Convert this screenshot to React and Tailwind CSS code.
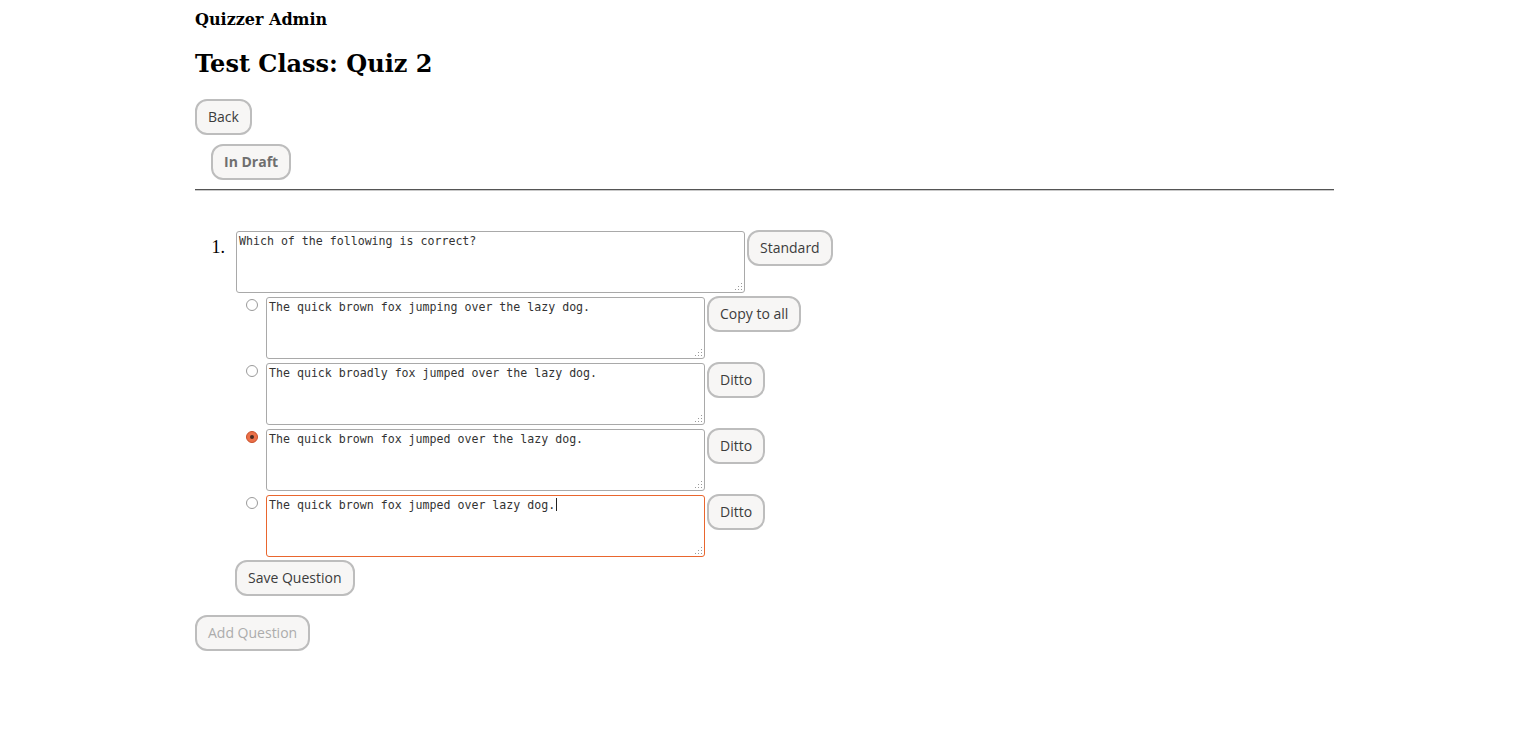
import React from 'react';

const Btn = ({ children, className = '' }) => (
  <button
    className={`h-[36px] px-[11px] rounded-[12px] border-2 border-[#bdbdbd] bg-[#f7f6f5] text-[14px] text-[#3c3c3c] font-['Open_Sans',sans-serif] leading-none shrink-0 ${className}`}
  >
    {children}
  </button>
);

const Grip = () => (
  <svg className="absolute right-[2px] bottom-[2px]" width="9" height="9" viewBox="0 0 9 9">
    {[[7, 1], [4, 4], [7, 4], [1, 7], [4, 7], [7, 7]].map(([x, y], i) => (
      <rect key={i} x={x} y={y} width="1" height="1" fill="#9a9a9a" />
    ))}
  </svg>
);

const Area = ({ value, width, focused }) => (
  <div className="relative shrink-0">
    <textarea
      readOnly
      value={value}
      className={`block h-[62px] resize-none rounded-[3px] border px-[2px] pt-[2px] text-[11.6px] leading-[15px] text-[#333] outline-none font-['DejaVu_Sans_Mono',monospace] ${
        focused ? 'border-[#e9662e]' : 'border-[#a9a9a9]'
      } ${width}`}
    />
    {focused && <span className="absolute left-[290px] top-[3px] h-[13px] w-px bg-[#222]" />}
    <Grip />
  </div>
);

const Radio = ({ checked }) =>
  checked ? (
    <span className="mt-[3px] flex h-[12px] w-[12px] shrink-0 items-center justify-center rounded-full border border-[#c8502a] bg-[#ec7049]">
      <span className="h-[4px] w-[4px] rounded-full bg-[#4a2a20]" />
    </span>
  ) : (
    <span className="mt-[3px] h-[12px] w-[12px] shrink-0 rounded-full border border-[#9a9a9a] bg-white" />
  );

const answers = [
  { text: 'The quick brown fox jumping over the lazy dog.', btn: 'Copy to all' },
  { text: 'The quick broadly fox jumped over the lazy dog.', btn: 'Ditto' },
  { text: 'The quick brown fox jumped over the lazy dog.', btn: 'Ditto', checked: true },
  { text: 'The quick brown fox jumped over lazy dog.', btn: 'Ditto', focused: true },
];

export default function App() {
  return (
    <div className="min-h-[748px] bg-white text-black font-['DejaVu_Serif',serif]">
      <div className="mx-auto w-[1139px] pt-[10px]">
        <div className="text-[16px] font-bold leading-[19px]">Quizzer Admin</div>
        <h2 className="mt-[21px] text-[24px] font-bold leading-[28px]">Test Class: Quiz 2</h2>

        <div className="mt-[21px]">
          <Btn>Back</Btn>
        </div>
        <div className="mt-[9px] pl-[16px]">
          <Btn className="font-bold text-[#6f6f6f]">In Draft</Btn>
        </div>

        <div className="mt-[9px] border-t border-b border-t-[#555] border-b-[#c9c9c9]" />

        {/* Question list */}
        <div className="mt-[39px] flex">
          <div className="w-[41px] shrink-0 pr-[11px] pt-[7px] text-right text-[18px] leading-[20px] font-['Liberation_Serif',serif]">
            1.
          </div>
          <div className="flex flex-col">
            <div className="flex items-start">
              <div className="mt-[1px]">
                <Area value="Which of the following is correct?" width="w-[509px]" />
              </div>
              <Btn className="ml-[2px]">Standard</Btn>
            </div>

            <div className="mt-[3px] flex flex-col gap-[3px] pl-[10px]">
              {answers.map((a, i) => (
                <div key={i} className="flex items-start">
                  <Radio checked={a.checked} />
                  <div className="ml-[8px] mt-[1px]">
                    <Area value={a.text} width="w-[439px]" focused={a.focused} />
                  </div>
                  <Btn className="ml-[2px]">{a.btn}</Btn>
                </div>
              ))}
            </div>

            <div className="mt-[3px] -ml-[1px]">
              <Btn>Save Question</Btn>
            </div>
          </div>
        </div>

        <div className="mt-[19px]">
          <Btn className="text-[#acacac]">Add Question</Btn>
        </div>
      </div>
    </div>
  );
}
